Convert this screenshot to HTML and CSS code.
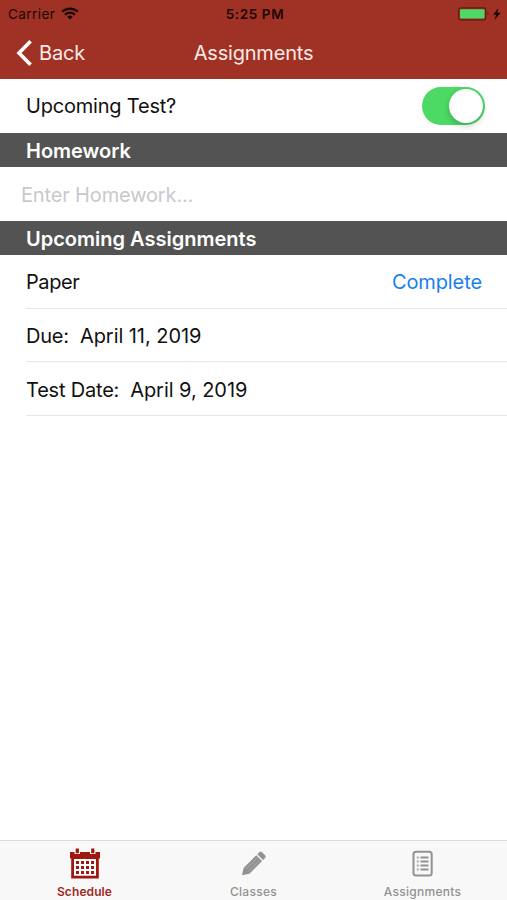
FILE: index.html
```
<!DOCTYPE html>
<html lang="en">
<head>
  <meta charset="UTF-8" />
  <meta name="viewport" content="width=device-width, initial-scale=1.0" />
  <title>Assignments</title>
  <link rel="stylesheet" href="styles.css">
</head>
<body>
  <header>
    <div class="status">
      <div class="carrier">
        <span>Carrier</span>
        <svg width="18" height="13" viewBox="0 0 18 13" fill="none" stroke="#1b0504" stroke-width="2.3">
          <path d="M1.2 4.8a11 11 0 0 1 15.6 0" />
          <path d="M4 7.7a7.1 7.1 0 0 1 10 0" />
          <path d="M9 12.6L6.2 9.8a4 4 0 0 1 5.6 0z" fill="#1b0504" stroke="none" />
        </svg>
      </div>
      <span class="time">5:25 PM</span>
      <div class="power">
        <svg width="44" height="14" viewBox="0 0 44 14">
          <rect x="0.7" y="0.8" width="27" height="12" rx="2.4" fill="none" stroke="#65180f" stroke-width="1.2" />
          <rect x="2" y="2.2" width="24.5" height="9.2" rx="1" fill="#4fd964" />
          <path d="M29.5 4.8q2 2 0 4z" fill="#65180f" />
          <path d="M40.5 1L35 7.8h3.2L36.5 13l6.2-7.2h-3.4z" fill="#1b0504" />
        </svg>
      </div>
    </div>
    <nav class="navbar">
      <a class="back">
        <svg width="16" height="26" viewBox="0 0 16 26" fill="none" stroke="#fff" stroke-width="3.6">
          <path d="M14.6 1.3L3 13l11.6 11.7" />
        </svg>
        <span>Back</span>
      </a>
      <h1>Assignments</h1>
    </nav>
  </header>

  <main>
    <div class="row first">
      <span class="test">Upcoming Test?</span>
      <div class="switch"><div class="knob"></div></div>
    </div>
    <h2>Homework</h2>
    <div class="row entry">
      <input type="text" class="homework" placeholder="Enter Homework..." />
    </div>
    <h2>Upcoming Assignments</h2>
    <div class="row line">
      <span class="paper">Paper</span>
      <a class="complete">Complete</a>
    </div>
    <div class="row line">
      <span class="label">Due:</span>
      <span class="date">April 11, 2019</span>
    </div>
    <div class="row line">
      <span class="label">Test Date:</span>
      <span class="date">April 9, 2019</span>
    </div>
  </main>

  <footer>
    <a class="tab active">
      <svg width="32" height="32" viewBox="0 0 32 32">
        <path d="M1 4h30v6.5h-1.2V30.5H2.2V10.500H1z" fill="#a0170f" />
        <path d="M5 11h22v16.700H5z" fill="#fff" />
        <path d="M5.500 0h5.500v6H5.500zM21 0h5.500v6H21z" fill="#f8f8f8" />
        <path d="M6.700 0.500h3.200v4.800H6.700zM22.200 0.500h3.200v4.800h-3.200z" fill="#a0170f" />
        <path d="M7 14.500h18M7 19.500h18M7 24.500h18" stroke="#a0170f" stroke-width="2.800" stroke-dasharray="3 2" />
      </svg>
      <span>Schedule</span>
    </a>
    <a class="tab">
      <svg width="32" height="32" viewBox="0 0 32 32">
        <path d="M4 27.300l1.600-7.300L18.300 7.300l5.800 5.800L11.400 25.700z" fill="#929292" />
        <path d="M19.300 6.300l2-2q1.400-1.400 2.800 0l3 3q1.400 1.400 0 2.800l-2 2z" fill="#929292" />
        <path d="M8 21L19.500 9.500M10.400 23.400l11.500-11.500" stroke="#b0b0b0" stroke-width="0.800" />
      </svg>
      <span>Classes</span>
    </a>
    <a class="tab">
      <svg width="32" height="32" viewBox="0 0 32 32" fill="none" stroke="#929292">
        <rect x="6.500" y="3.800" width="18.200" height="23.700" rx="2.500" stroke-width="2" />
        <path d="M9.800 9.500h2M9.800 13.500h2M9.800 17.500h2M9.800 21.500h2" stroke-width="1.800" stroke="#a8a8a8" />
        <path d="M13.500 9.500h8M13.500 13.500h8M13.500 17.500h8M13.500 21.500h8" stroke-width="2.200" />
      </svg>
      <span>Assignments</span>
    </a>
  </footer>
</body>
</html>
```
FILE: styles.css
```
* {
  box-sizing: border-box;
}
body {
  margin: 0;
  height: 900px;
  display: flex;
  flex-direction: column;
  background: #fff;
  color: #111;
  font-family: Inter, "Liberation Sans", sans-serif;
  font-size: 20px;
  letter-spacing: -0.2px;
  overflow: hidden;
}
header {
  height: 79px;
  background: #a03225;
}
.status {
  height: 27px;
  display: grid;
  grid-template-columns: 1fr auto 1fr;
  align-items: center;
  padding: 0 5px 0 8px;
  color: #1b0504;
  font-size: 13.5px;
}
.carrier {
  display: flex;
  align-items: center;
  gap: 6px;
  letter-spacing: 0.45px;
}
.time {
  font-weight: 600;
  letter-spacing: 0.6px;
}
.power {
  display: flex;
  justify-content: flex-end;
}
.navbar {
  height: 52px;
  display: grid;
  grid-template-columns: 1fr auto 1fr;
  align-items: center;
  padding: 0 16px;
  color: #fbe9e6;
}
.back {
  display: flex;
  align-items: center;
  gap: 7px;
}
h1 {
  margin: 0;
  font-size: 20px;
  font-weight: 400;
}
main {
  flex: 1;
}
.row {
  height: 54px;
  display: flex;
  align-items: center;
  padding: 1px 26px 0;
}
.first {
  justify-content: space-between;
  padding-top: 0;
  padding-right: 22px;
}
.switch {
  width: 63px;
  height: 38px;
  padding: 2px;
  display: flex;
  justify-content: flex-end;
  border-radius: 19px;
  background: #4cd964;
}
.knob {
  width: 34px;
  height: 34px;
  border-radius: 50%;
  background: #fff;
  box-shadow: 0 3px 6px rgba(0, 0, 0, 0.2);
}
h2 {
  margin: 0;
  height: 34px;
  padding-left: 26px;
  background: #535353;
  color: #fff;
  font-size: 20px;
  font-weight: 600;
  line-height: 36px;
  letter-spacing: 0;
}
.entry {
  padding-top: 2px;
  padding-left: 21px;
}
.homework {
  width: 100%;
  padding: 0;
  border: 0;
  outline: 0;
  font: inherit;
  letter-spacing: -0.15px;
}
.homework::placeholder {
  color: #c9c9cd;
}
.line {
  height: 53.7px;
  margin-left: 26px;
  padding-top: 2px;
  padding-left: 0;
  border-bottom: 1px solid #e6e6e8;
}
.paper {
  letter-spacing: -0.4px;
}
.label {
  margin-right: 11px;
}
.date {
  letter-spacing: -0.05px;
}
.complete {
  margin-left: auto;
  margin-right: -1px;
  letter-spacing: -0.1px;
  color: #1880ed;
}
footer {
  height: 60px;
  display: grid;
  grid-template-columns: repeat(3, 1fr);
  border-top: 1px solid #dcdcdc;
  background: #f8f8f8;
}
.tab {
  display: flex;
  flex-direction: column;
  align-items: center;
  padding-top: 7px;
  color: #929292;
  font-size: 12px;
  font-weight: 500;
  letter-spacing: 0.3px;
}
.tab span {
  margin-top: 4px;
  line-height: 15px;
}
.active {
  color: #a0281e;
}
.active span {
  font-weight: 600;
  letter-spacing: 0.1px;
}
```
